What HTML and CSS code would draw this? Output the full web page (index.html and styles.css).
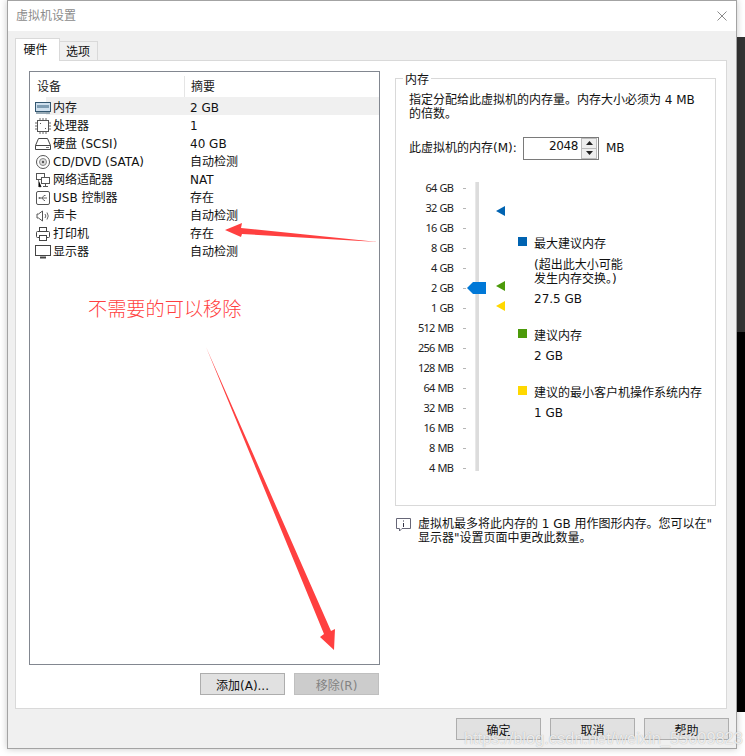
FILE: index.html
```html
<!DOCTYPE html>
<html lang="zh-CN">
<head>
<meta charset="utf-8">
<title>虚拟机设置</title>
<link rel="stylesheet" href="styles.css">
</head>
<body>
<div class="backdrop"></div>
<div class="window">
  <header class="titlebar">
    <span class="title">虚拟机设置</span>
    <svg class="close" width="10" height="10" viewBox="0 0 10 10"><path d="M.5.5l9 9M9.500.5l-9 9" stroke="#8a8a8a" stroke-width="1" fill="none"/></svg>
  </header>
  <div class="content">
    <div class="tabs">
      <div class="tab active">硬件</div>
      <div class="tab">选项</div>
    </div>
    <div class="panel">
      <section class="left">
        <div class="list">
          <div class="row head"><span class="c1">设备</span><span class="c2">摘要</span></div>
          <div class="row selected">
            <svg class="ico" viewBox="0 0 16 16"><rect x="0.5" y="2.5" width="15" height="9" fill="#cfe0ee" stroke="#33566f"/><path d="M2 5h12v3H2z" fill="#7f9db3"/><path d="M1 13h14" stroke="#33566f"/></svg>
            <span class="c1">内存</span><span class="c2">2 GB</span>
          </div>
          <div class="row">
            <svg class="ico" viewBox="0 0 16 16"><rect x="2.5" y="2.5" width="11" height="11" fill="#fff" stroke="#555"/><path d="M0 5h2M0 8h2M0 11h2M14 5h2M14 8h2M14 11h2M5 0v2M8 0v2M11 0v2M5 14v2M8 14v2M11 14v2" stroke="#666"/><path d="M5 5h1v1H5zM10 10h1v1h-1z" fill="#555"/></svg>
            <span class="c1">处理器</span><span class="c2">1</span>
          </div>
          <div class="row">
            <svg class="ico" viewBox="0 0 16 16"><path d="M3.500 2.500h9l3 7v4h-15v-4z" fill="#fff" stroke="#444"/><path d="M.5 9.500h15" stroke="#444"/><path d="M11 11.500h3" stroke="#777"/></svg>
            <span class="c1">硬盘 (SCSI)</span><span class="c2">40 GB</span>
          </div>
          <div class="row">
            <svg class="ico" viewBox="0 0 16 16"><circle cx="8" cy="8" r="6.5" fill="#fff" stroke="#555"/><circle cx="8" cy="8" r="3.500" fill="#ddd" stroke="#888"/><circle cx="8" cy="8" r="1.200" fill="#555"/></svg>
            <span class="c1">CD/DVD (SATA)</span><span class="c2">自动检测</span>
          </div>
          <div class="row">
            <svg class="ico" viewBox="0 0 16 16"><rect x="1.500" y="1.500" width="8" height="6" fill="#fff" stroke="#555"/><rect x="6.500" y="5.500" width="8" height="6" fill="#fff" stroke="#555"/><path d="M10.500 11.500v3M8 14.500h5" stroke="#555"/><path d="M3.500 8v7h3" stroke="#777" stroke-dasharray="1 1"/></svg>
            <span class="c1">网络适配器</span><span class="c2">NAT</span>
          </div>
          <div class="row">
            <svg class="ico" viewBox="0 0 16 16"><rect x="1.500" y="1.500" width="13" height="13" rx="1.500" fill="#fff" stroke="#555"/><path d="M4 8h8M7 8l2-2.500h1.500M7 8l2 2.500h1" stroke="#666" fill="none"/><circle cx="4.500" cy="8" r="1" fill="#666"/></svg>
            <span class="c1">USB 控制器</span><span class="c2">存在</span>
          </div>
          <div class="row">
            <svg class="ico" viewBox="0 0 16 16"><path d="M3.500 6H2v4h1.500L7.500 13V3z" fill="#fff" stroke="#555"/><path d="M10 6a3 3 0 0 1 0 4M12 4.500a6 6 0 0 1 0 7" stroke="#666" fill="none"/></svg>
            <span class="c1">声卡</span><span class="c2">自动检测</span>
          </div>
          <div class="row">
            <svg class="ico" viewBox="0 0 16 16"><rect x="4.500" y="1.500" width="7" height="4" fill="#fff" stroke="#444"/><rect x="1.500" y="5.500" width="13" height="6" rx="1" fill="#fff" stroke="#444"/><rect x="4.500" y="9.500" width="7" height="5" fill="#fff" stroke="#444"/></svg>
            <span class="c1">打印机</span><span class="c2">存在</span>
          </div>
          <div class="row">
            <svg class="ico" viewBox="0 0 16 16"><rect x="0.500" y="1.500" width="15" height="10" fill="#fff" stroke="#444"/><path d="M5 13.500h6" stroke="#444" stroke-width="2"/></svg>
            <span class="c1">显示器</span><span class="c2">自动检测</span>
          </div>
        </div>
        <div class="list-actions">
          <button class="btn">添加(A)...</button>
          <button class="btn disabled">移除(R)</button>
        </div>
      </section>
      <section class="right">
        <div class="group">
          <span class="legend">内存</span>
          <p class="intro">指定分配给此虚拟机的内存量。内存大小必须为 4 MB<br>的倍数。</p>
          <div class="memrow">
            <span class="memlabel">此虚拟机的内存(M):</span>
            <div class="spin">
              <span class="spinval">2048</span>
              <span class="spinbtns">
                <span class="sb"><svg width="7" height="4" viewBox="0 0 7 4"><path d="M3.500 0L7 4H0z" fill="#222"/></svg></span>
                <span class="sb"><svg width="7" height="4" viewBox="0 0 7 4"><path d="M3.500 4L7 0H0z" fill="#222"/></svg></span>
              </span>
            </div>
            <span class="unit">MB</span>
          </div>
          <div class="scale-area">
            <div class="scale">
              <div class="tick">64 GB</div><div class="tick">32 GB</div><div class="tick">16 GB</div><div class="tick">8 GB</div><div class="tick">4 GB</div><div class="tick">2 GB</div><div class="tick">1 GB</div><div class="tick">512 MB</div><div class="tick">256 MB</div><div class="tick">128 MB</div><div class="tick">64 MB</div><div class="tick">32 MB</div><div class="tick">16 MB</div><div class="tick">8 MB</div><div class="tick">4 MB</div>
            </div>
            <div class="slider">
              <div class="track"></div>
              <svg class="thumb" width="19" height="12" viewBox="0 0 19 12"><path d="M0 6L6 0h13v12H6z" fill="#0078d7"/></svg>
              <span class="mark m-blue"></span>
              <span class="mark m-green"></span>
              <span class="mark m-yellow"></span>
            </div>
            <div class="keys">
              <div class="key k1">
                <div class="keytitle"><i class="sw blue"></i>最大建议内存</div>
                <div class="keynote">(超出此大小可能<br>发生内存交换。)</div>
                <div class="keyval">27.5 GB</div>
              </div>
              <div class="key k2">
                <div class="keytitle"><i class="sw green"></i>建议内存</div>
                <div class="keyval">2 GB</div>
              </div>
              <div class="key k3">
                <div class="keytitle"><i class="sw yellow"></i>建议的最小客户机操作系统内存</div>
                <div class="keyval">1 GB</div>
              </div>
            </div>
          </div>
        </div>
        <div class="note">
          <svg class="noteico" width="15" height="15" viewBox="0 0 15 15"><path d="M.5 1.500h14v10H6l-2.500 2.500v-2.500H.5z" fill="#fff" stroke="#667"/><path d="M7.500 3.500v1M7.500 6v4" stroke="#334" stroke-width="1"/></svg>
          <p>虚拟机最多将此内存的 1 GB 用作图形内存。您可以在"<br>显示器"设置页面中更改此数量。</p>
        </div>
      </section>
    </div>
    <div class="footer">
      <button class="btn">确定</button>
      <button class="btn">取消</button>
      <button class="btn">帮助</button>
    </div>
  </div>
</div>
<div class="annotation">不需要的可以移除</div>
<svg class="arrows" width="745" height="756" viewBox="0 0 745 756">
  <path d="M225 230L242 223 241 228 378 242 242 234 241 237z" fill="#ff4040"/>
  <path d="M206 347L331 631 335 629 334 650 320 637 324 634z" fill="#ff4040"/>
</svg>
<div class="watermark">https://blog.csdn.net/weixin_55609823</div>
</body>
</html>
```
FILE: styles.css
```css
* { box-sizing: border-box; }
html, body { margin: 0; padding: 0; }
body {
  width: 745px;
  height: 756px;
  overflow: hidden;
  position: relative;
  background: #fff;
  font: 12px/14px "DejaVu Sans", "Noto Sans CJK SC", sans-serif;
  color: #111;
  padding: 0 0 0 7px;
}
p { margin: 0; }
.backdrop {
  position: absolute;
  right: 0;
  top: 37px;
  width: 10px;
  height: 675px;
  background: linear-gradient(to bottom, #333 0, #333 295px, #000 295px);
}
.window {
  position: relative;
  width: 730px;
  height: 749px;
  border: 1px solid #a3a3a3;
  background: #f0f0f0;
  box-shadow: 0 0 7px rgba(0,0,0,.22);
  display: flex;
  flex-direction: column;
}
.titlebar {
  height: 30px;
  flex: none;
  background: #fff;
  display: flex;
  align-items: center;
  justify-content: space-between;
  padding: 0 9px 0 8px;
}
.title { color: #8c8c8c; }
.content { flex: 1; display: flex; flex-direction: column; padding: 7px 7px 0 7px; }
.tabs { display: flex; align-items: flex-end; height: 22px; position: relative; z-index: 1; }
.tab {
  width: 38px;
  height: 19px;
  background: #f0f0f0;
  border: 1px solid #d9d9d9;
  border-bottom: 0;
  border-left: 0;
  text-align: center;
  line-height: 20px;
  padding-right: 1px;
}
.tab.active {
  width: 45px;
  height: 23px;
  margin-bottom: -1px;
  background: #fff;
  border-left: 1px solid #d9d9d9;
  line-height: 22px;
  padding-right: 4px;
}
.panel {
  height: 649px;
  width: 712px;
  background: #fff;
  border: 1px solid #d9d9d9;
  display: flex;
  padding: 10px 10px 0 13px;
}
.left { width: 351px; flex: none; }
.list {
  height: 594px;
  border: 1px solid #828790;
  background: #fff;
  padding-top: 1px;
}
.row {
  display: flex;
  height: 18px;
  align-items: center;
  padding: 3px 0 0 5px;
  position: relative;
}
.row.head { height: 24px; padding: 3px 0 0 7px; color: #222; }
.row.head .c1 { width: 147px; }
.row.head .c2 { border-left: 1px solid #e5e5e5; height: 22px; line-height: 22px; padding-left: 6px; }
.row.selected { background: linear-gradient(to right, #fff 16px, #f0f0f0 16px); }
.ico { width: 16px; height: 16px; flex: none; margin-right: 2px; }
.c1 { width: 137px; flex: none; white-space: nowrap; }
.c2 { white-space: nowrap; }
.list-actions { display: flex; justify-content: flex-end; gap: 9px; margin-top: 8px; margin-right: 1px; }
.btn {
  width: 85px;
  height: 22px;
  padding: 3px 0 0;
  background: #e1e1e1;
  border: 1px solid #adadad;
  font: inherit;
  color: #111;
}
.btn.disabled { background: #ccc; border-color: #bfbfbf; color: #838383; }
.right { width: 321px; margin-left: 15px; padding-top: 7px; }
.group {
  position: relative;
  height: 428px;
  border: 1px solid #d9d9d9;
  padding: 14px 0 0 13px;
}
.legend { position: absolute; left: 7px; top: -6px; background: #fff; padding: 0 2px; }
.intro { line-height: 14px; white-space: nowrap; }
.memrow { display: flex; align-items: center; margin-top: 15px; height: 24px; }
.memlabel { width: 114px; white-space: nowrap; }
.spin {
  width: 76px;
  height: 23px;
  border: 1px solid #7a7a7a;
  display: flex;
  justify-content: flex-end;
  background: #fff;
}
.spinval { line-height: 16px; padding-right: 3px; letter-spacing: -.4px; }
.spinbtns { width: 16px; flex: none; border: 1px solid #bbb; display: flex; flex-direction: column; background: #eee; margin: 0 1px 0 0; }
.sb { flex: 1; display: flex; align-items: center; justify-content: center; }
.sb + .sb { border-top: 1px solid #bbb; }
.unit { margin-left: 7px; }
.scale-area { display: flex; margin-top: 19px; height: 300px; }
.scale { width: 57px; flex: none; }
.tick {
  height: 20px;
  line-height: 18px;
  font-family: "Noto Sans", sans-serif;
  font-size: 11px;
  white-space: nowrap;
  text-align: right;
  color: #222;
  position: relative;
  padding-right: 13px;
  letter-spacing: -.8px;
  word-spacing: 1px;
}
.tick::after {
  content: "";
  position: absolute;
  right: 0;
  top: 9px;
  width: 3px;
  height: 1px;
  background: #b5b5b5;
}
.slider { width: 50px; flex: none; position: relative; }
.track { position: absolute; left: 9px; top: 3px; width: 4px; height: 289px; background: #dcdcdc; border-left: 1px solid #e8e8e8; }
.thumb { position: absolute; left: 1px; top: 103px; }
.mark {
  position: absolute;
  left: 30px;
  width: 0;
  height: 0;
  border-style: solid;
  border-width: 5px 9px 5px 0;
  border-color: transparent;
}
.m-blue { top: 27px; border-right-color: #0063b1; }
.m-green { top: 102px; border-right-color: #4c9a0a; }
.m-yellow { top: 122px; border-right-color: #ffd800; }
.keys { flex: 1; padding-left: 2px; }
.key { padding-left: 16px; }
.keytitle { position: relative; white-space: nowrap; line-height: 16px; }
.sw { position: absolute; left: -16px; top: 1px; width: 9px; height: 9px; }
.blue { background: #0063b1; }
.green { background: #4c9a0a; }
.yellow { background: #ffd800; }
.keynote { margin-top: 6px; line-height: 14px; white-space: nowrap; }
.keyval { margin-top: 4px; line-height: 16px; }
.keynote + .keyval { margin-top: 5px; }
.k1 { padding-top: 57px; }
.k2 { margin-top: 21px; }
.k3 { margin-top: 21px; }
.note { display: flex; margin-top: 11px; padding-left: 1px; }
.noteico { flex: none; margin-right: 7px; }
.note p { white-space: nowrap; line-height: 14px; }
.footer { display: flex; justify-content: flex-end; gap: 9px; margin-top: 9px; }
.annotation {
  position: absolute;
  left: 88px;
  top: 297px;
  color: #ff4040;
  font-size: 19.2px;
  line-height: 26px;
  font-weight: 300;
  white-space: nowrap;
}
.arrows { position: absolute; left: 0; top: 0; pointer-events: none; }
.watermark {
  position: absolute;
  left: 464px;
  top: 729px;
  font: 16.4px/18px "Liberation Sans", sans-serif;
  color: rgba(255,255,255,.8);
  text-shadow: 0 0 1px rgba(110,110,110,.6);
  white-space: nowrap;
}
```
